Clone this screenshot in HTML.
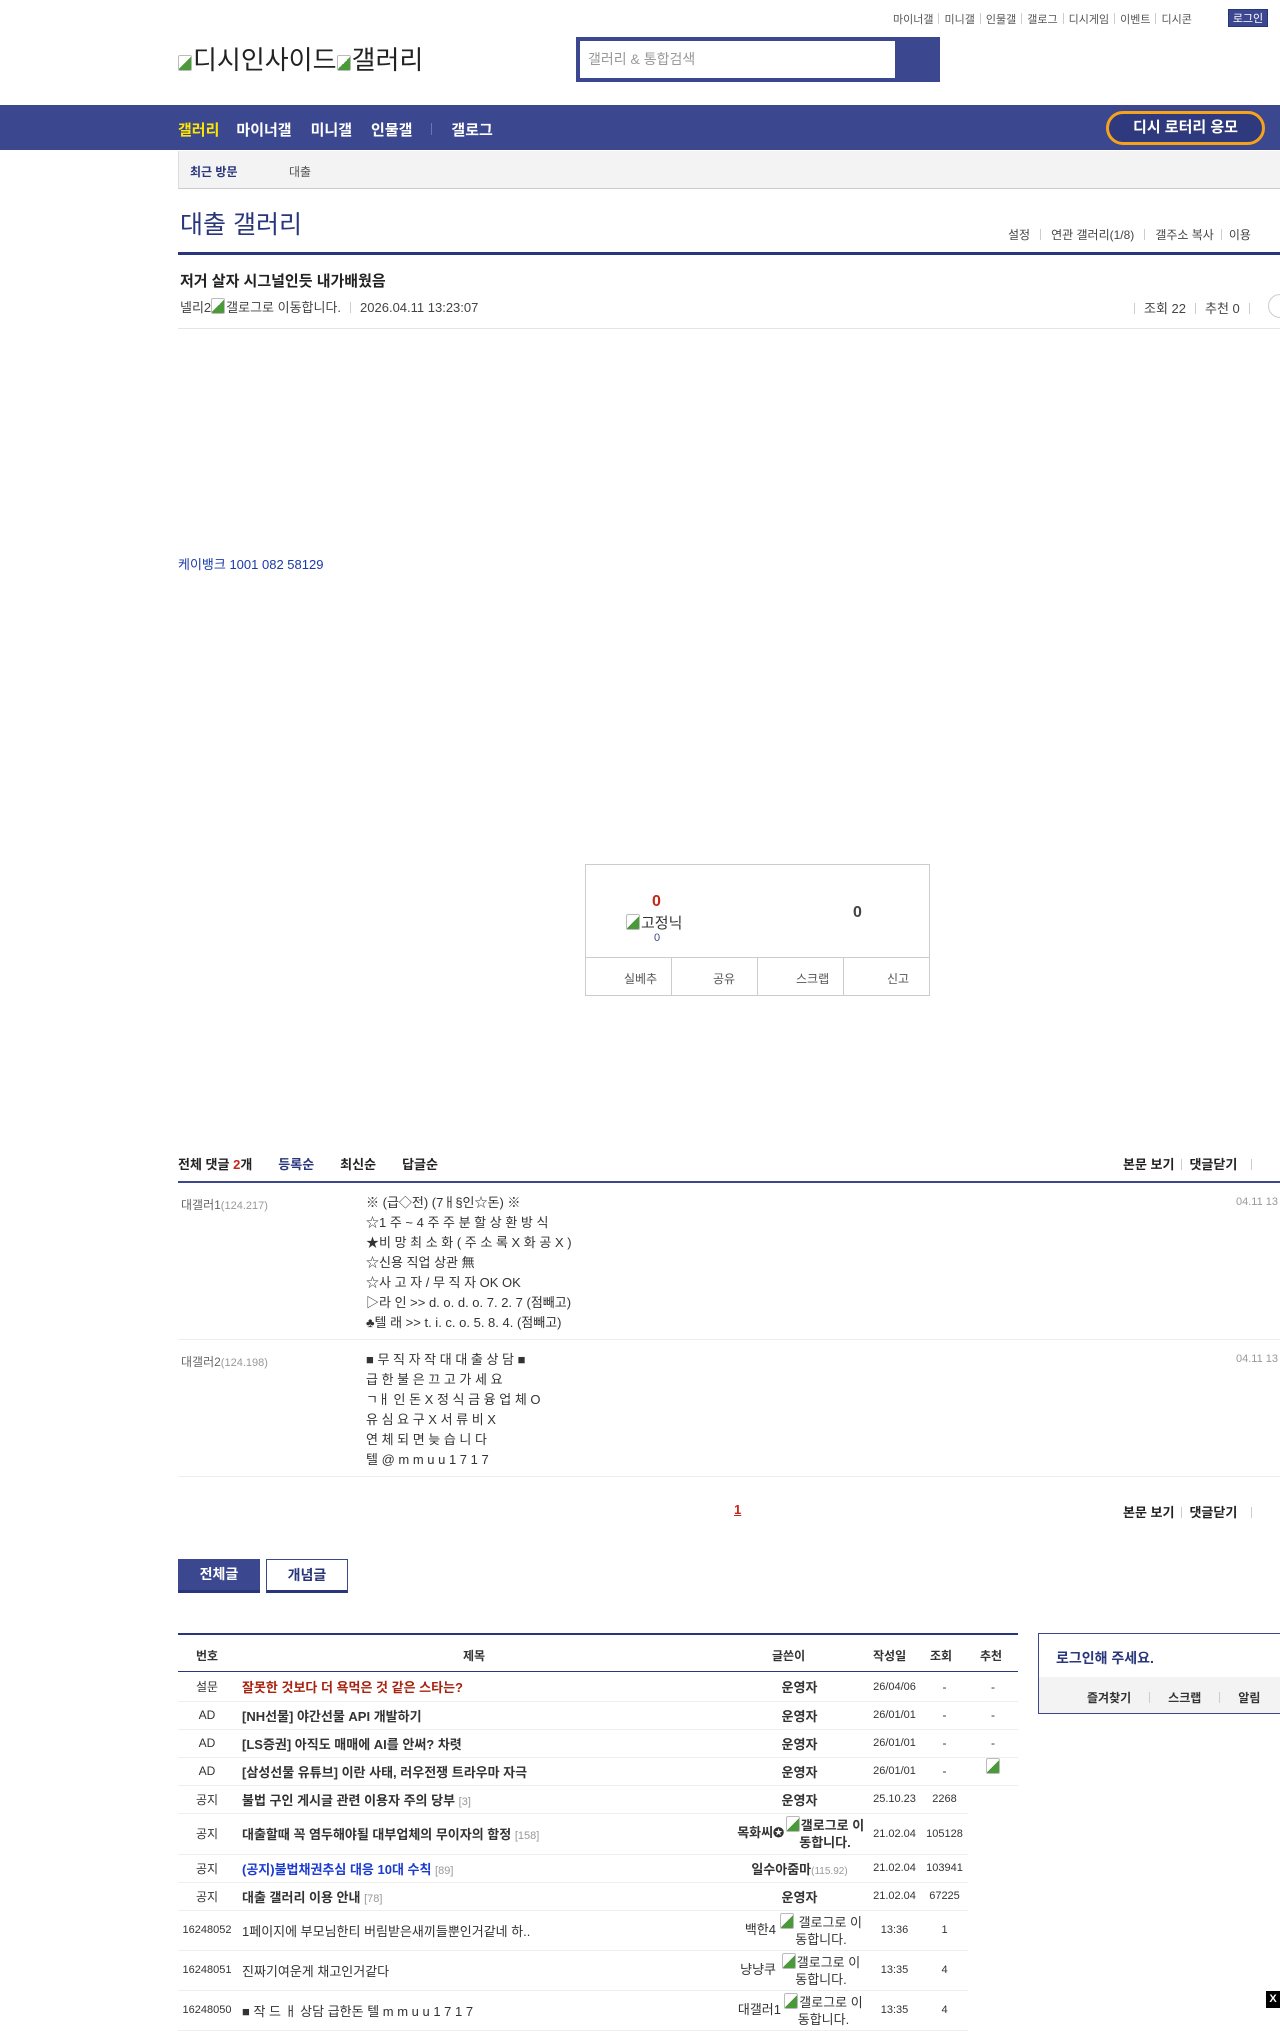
<!DOCTYPE html>
<html><head><meta charset="utf-8">
<style>
*{margin:0;padding:0;box-sizing:border-box}
body{width:1280px;height:2008px;position:relative;overflow:hidden;background:#fff;font-family:"Liberation Sans","Noto Sans CJK KR",sans-serif;color:#333;font-size:13px}
.a{position:absolute;white-space:nowrap}
.navy{color:#29367c}
.sep{display:inline-block;width:1px;height:11px;background:#ccc;margin:0 7px;vertical-align:-1px}
.img{display:inline-block;width:14px;height:16px;border:1px solid #bbb;border-radius:2px;background:linear-gradient(135deg,#fff 50%,#4a9a3a 50%);vertical-align:-2px;margin-right:1px}
table{border-collapse:collapse;white-space:normal !important;table-layout:fixed}
.lt td{height:28px;border-bottom:1px solid #eee;font-size:12px;text-align:center;white-space:nowrap}
.lt td.t{text-align:left;font-size:13px;padding-left:6px}
.lt td.w{font-size:13px;white-space:normal}
.gl{display:inline-block;vertical-align:middle;text-align:center;white-space:normal;font-size:13px}
</style></head><body>
<div class="a" style="top:11px;left:893px;font-size:11px;color:#555">마이너갤<span class="sep" style="margin:0 5px"></span>미니갤<span class="sep" style="margin:0 5px"></span>인물갤<span class="sep" style="margin:0 5px"></span>갤로그<span class="sep" style="margin:0 5px"></span>디시게임<span class="sep" style="margin:0 5px"></span>이벤트<span class="sep" style="margin:0 5px"></span>디시콘</div>
<div class="a" style="top:9px;left:1228px;width:40px;height:18px;background:#3b4890;color:#fff;font-size:11px;text-align:center;line-height:18px;border:1px solid #29367c">로그인</div>
<div class="a" style="top:40px;left:178px;font-size:26px;color:#222"><span class="img"></span>디시인사이드<span class="img"></span>갤러리</div>
<div class="a" style="top:37px;left:576px;width:364px;height:45px;background:#3b4890"></div>
<div class="a" style="top:41px;left:580px;width:315px;height:37px;background:#fff;color:#999;font-size:14px;line-height:37px;padding-left:8px">갤러리 &amp; 통합검색</div>
<div class="a" style="top:105px;left:0;width:1280px;height:45px;background:#3b4890"></div>
<div class="a" style="top:119px;left:178px;font-size:15px;font-weight:bold;color:#fff"><span style="color:#ffe600">갤러리</span><span style="margin-left:17px">마이너갤</span><span style="margin-left:19px">미니갤</span><span style="margin-left:19px">인물갤</span><span style="display:inline-block;width:1px;height:12px;background:#6a76b0;margin:0 19px"></span>갤로그</div>
<div class="a" style="top:111px;left:1106px;width:159px;height:34px;border:3px solid #f7a21b;border-radius:17px;background:#2f3a7e;color:#fff;font-weight:bold;font-size:15px;text-align:center;line-height:28px">디시 로터리 응모</div>
<div class="a" style="top:151px;left:178px;width:1102px;height:38px;background:#f3f3f3;border-left:1px solid #ddd;border-bottom:1px solid #ccc"></div>
<div class="a navy" style="top:163px;left:190px;font-size:12px;font-weight:bold">최근 방문</div>
<div class="a" style="top:163px;left:289px;font-size:12px;color:#555">대출</div>
<div class="a navy" style="top:205px;left:180px;font-size:25px">대출 갤러리</div>
<div class="a" style="top:226px;left:1008px;font-size:12px;color:#444">설정<span class="sep" style="margin:0 10px"></span>연관 갤러리(1/8)<span class="sep" style="margin:0 10px"></span>갤주소 복사<span class="sep" style="margin:0 7px"></span>이용</div>
<div class="a" style="top:252px;left:178px;width:1102px;height:3px;background:#29367c"></div>
<div class="a" style="top:270px;left:180px;font-size:15px;font-weight:bold;color:#222">저거 살자 시그널인듯 내가배웠음</div>
<div class="a" style="top:297px;left:180px;font-size:13px;color:#444">넬리2<span class="img"></span>갤로그로 이동합니다.<span class="sep" style="margin:0 9px"></span>2026.04.11 13:23:07</div>
<div class="a" style="top:298px;left:1134px;font-size:13px;color:#444"><span class="sep" style="margin:0 9px 0 0"></span>조회 22<span class="sep" style="margin:0 9px"></span>추천 0<span class="sep" style="margin:0 9px"></span></div>
<div class="a" style="top:294px;left:1268px;width:30px;height:24px;border:1px solid #ccc;border-radius:12px"></div>
<div class="a" style="top:328px;left:178px;width:1102px;height:1px;background:#e5e5e5"></div>
<div class="a" style="top:554px;left:178px;font-size:13px;color:#1a3aa8">케이뱅크 1001 082 58129</div>
<div class="a" style="top:864px;left:585px;width:345px;height:132px;border:1px solid #ccc"></div>
<div class="a" style="top:893px;left:652px;font-size:16px;font-weight:bold;color:#c4271a">0</div>
<div class="a" style="top:912px;left:626px;font-size:15px;color:#333"><span class="img"></span>고정닉</div>
<div class="a" style="top:932px;left:654px;font-size:11px;color:#3b4890">0</div>
<div class="a" style="top:904px;left:853px;font-size:16px;font-weight:bold;color:#444">0</div>
<div class="a" style="top:957px;left:585px;width:345px;height:1px;background:#ccc"></div>
<div class="a" style="top:957px;left:671px;width:1px;height:39px;background:#ccc"></div>
<div class="a" style="top:957px;left:757px;width:1px;height:39px;background:#ccc"></div>
<div class="a" style="top:957px;left:843px;width:1px;height:39px;background:#ccc"></div>
<div class="a" style="top:970px;left:624px;font-size:12px;color:#555">실베추</div>
<div class="a" style="top:970px;left:713px;font-size:12px;color:#555">공유</div>
<div class="a" style="top:970px;left:796px;font-size:12px;color:#555">스크랩</div>
<div class="a" style="top:970px;left:887px;font-size:12px;color:#555">신고</div>
<div class="a" style="top:1154px;left:178px;font-size:13px;font-weight:bold;color:#222">전체 댓글 <span style="color:#c4271a">2</span>개<span class="navy" style="margin-left:26px">등록순</span><span style="margin-left:26px">최신순</span><span style="margin-left:26px">답글순</span></div>
<div class="a" style="top:1154px;left:1123px;font-size:13px;font-weight:bold;color:#222">본문 보기<span class="sep"></span>댓글닫기<span class="sep" style="margin-left:14px"></span></div>
<div class="a" style="top:1181px;left:178px;width:1102px;height:2px;background:#3b4890"></div>
<div class="a" style="top:1196px;left:181px;font-size:12px;color:#666">대갤러1<span style="font-size:11px;color:#999">(124.217)</span></div>
<div class="a" style="top:1196px;left:1236px;font-size:11px;color:#999">04.11 13</div>
<div class="a" style="top:1193px;left:366px;font-size:13px;color:#333;line-height:20px">※ (급◇전) (7ㅐ§인☆돈) ※<br>☆1 주 ~ 4 주 주 분 할 상 환 방 식<br>★비 망 최 소 화 ( 주 소 록 X 화 공 X )<br>☆신용 직업 상관 無<br>☆사 고 자 / 무 직 자 OK OK<br>▷라 인 &gt;&gt; d. o. d. o. 7. 2. 7 (점빼고)<br>♣텔 래 &gt;&gt; t. i. c. o. 5. 8. 4. (점빼고)</div>
<div class="a" style="top:1339px;left:178px;width:1102px;height:1px;background:#eee"></div>
<div class="a" style="top:1353px;left:181px;font-size:12px;color:#666">대갤러2<span style="font-size:11px;color:#999">(124.198)</span></div>
<div class="a" style="top:1353px;left:1236px;font-size:11px;color:#999">04.11 13</div>
<div class="a" style="top:1350px;left:366px;font-size:13px;color:#333;line-height:20px">■ 무 직 자 작 대 대 출 상 담 ■<br>급 한 불 은 끄 고 가 세 요<br>ㄱㅐ 인 돈 X 정 식 금 융 업 체 O<br>유 심 요 구 X 서 류 비 X<br>연 체 되 면 늦 습 니 다<br>텔 @ m m u u 1 7 1 7</div>
<div class="a" style="top:1476px;left:178px;width:1102px;height:1px;background:#eee"></div>
<div class="a" style="top:1502px;left:734px;font-size:13px;font-weight:bold;color:#c4271a;text-decoration:underline">1</div>
<div class="a" style="top:1502px;left:1123px;font-size:13px;font-weight:bold;color:#222">본문 보기<span class="sep"></span>댓글닫기<span class="sep" style="margin-left:14px"></span></div>
<div class="a" style="top:1559px;left:178px;width:82px;height:34px;background:#3b4890;border-bottom:3px solid #29367c;color:#fff;font-weight:bold;font-size:14px;text-align:center;line-height:31px">전체글</div>
<div class="a" style="top:1559px;left:266px;width:82px;height:34px;background:#fff;border:1px solid #3b4890;border-bottom:3px solid #29367c;color:#29367c;font-weight:bold;font-size:14px;text-align:center;line-height:30px">개념글</div>
<div class="a" style="top:1633px;left:178px;width:840px;height:2px;background:#29367c"></div>
<div class="a" style="top:1671px;left:178px;width:840px;height:1px;background:#29367c"></div>
<div class="a" style="top:1647px;left:196px;font-size:12px;font-weight:bold;color:#333">번호</div>
<div class="a" style="top:1647px;left:463px;font-size:12px;font-weight:bold;color:#333">제목</div>
<div class="a" style="top:1647px;left:772px;font-size:12px;font-weight:bold;color:#333">글쓴이</div>
<div class="a" style="top:1647px;left:873px;font-size:12px;font-weight:bold;color:#333">작성일</div>
<div class="a" style="top:1647px;left:930px;font-size:12px;font-weight:bold;color:#333">조회</div>
<div class="a" style="top:1647px;left:980px;font-size:12px;font-weight:bold;color:#333">추천</div>
<table class="a lt" style="top:1673px;left:178px;width:840px">
<colgroup><col style="width:58px"><col style="width:495px"><col style="width:137px"><col style="width:53px"><col style="width:47px"><col style="width:50px"></colgroup>
<tr><td>설문</td><td class="t" style="color:#a8230f;font-weight:bold">잘못한 것보다 더 욕먹은 것 같은 스타는?</td><td class="w" style="font-weight:bold">운영자</td><td style="font-size:11px">26/04/06</td><td>-</td><td>-</td></tr>
<tr><td>AD</td><td class="t" style="font-weight:bold">[NH선물] 야간선물 API 개발하기</td><td class="w" style="font-weight:bold">운영자</td><td style="font-size:11px">26/01/01</td><td>-</td><td>-</td></tr>
<tr><td>AD</td><td class="t" style="font-weight:bold">[LS증권] 아직도 매매에 AI를 안써? 차렷</td><td class="w" style="font-weight:bold">운영자</td><td style="font-size:11px">26/01/01</td><td>-</td><td>-</td></tr>
<tr><td>AD</td><td class="t" style="font-weight:bold">[삼성선물 유튜브] 이란 사태, 러우전쟁 트라우마 자극</td><td class="w" style="font-weight:bold">운영자</td><td style="font-size:11px">26/01/01</td><td>-</td><td style="vertical-align:top"><span class="img"></span></td></tr>
<tr><td>공지</td><td class="t" style="font-weight:bold">불법 구인 게시글 관련 이용자 주의 당부 <span style="font-weight:normal;color:#999;font-size:11px">[3]</span></td><td class="w" style="font-weight:bold">운영자</td><td style="font-size:11px">25.10.23</td><td style="font-size:11px">2268</td><td style="border:0"></td></tr>
<tr><td style="height:41px">공지</td><td class="t" style="font-weight:bold">대출할때 꼭 염두해야될 대부업체의 무이자의 함정 <span style="font-weight:normal;color:#999;font-size:11px">[158]</span></td><td class="w" style="font-weight:bold;line-height:17px;white-space:nowrap;text-align:right;padding-right:2px">목화씨✪<span class="gl" style="width:82px;font-weight:bold"><span class="img"></span>갤로그로 이동합니다.</span></td><td style="font-size:11px">21.02.04</td><td style="font-size:11px">105128</td><td style="border:0"></td></tr>
<tr><td>공지</td><td class="t" style="font-weight:bold;color:#1a3ad0">(공지)불법채권추심 대응 10대 수칙 <span style="font-weight:normal;color:#999;font-size:11px">[89]</span></td><td class="w" style="font-weight:bold;white-space:nowrap">일수아줌마<span style="font-weight:normal;color:#999;font-size:10px">(115.92)</span></td><td style="font-size:11px">21.02.04</td><td style="font-size:11px">103941</td><td style="border:0"></td></tr>
<tr><td>공지</td><td class="t" style="font-weight:bold">대출 갤러리 이용 안내 <span style="font-weight:normal;color:#999;font-size:11px">[78]</span></td><td class="w" style="font-weight:bold">운영자</td><td style="font-size:11px">21.02.04</td><td style="font-size:11px">67225</td><td style="border:0"></td></tr>
<tr><td style="height:40px;font-size:11px">16248052</td><td class="t">1페이지에 부모님한티 버림받은새끼들뿐인거같네 하..</td><td class="w" style="line-height:17px;white-space:nowrap;text-align:right;padding-right:2px">백한4<span class="gl" style="width:90px"><span class="img"></span> 갤로그로 이동합니다.</span></td><td style="font-size:11px">13:36</td><td style="font-size:11px">1</td><td style="border:0"></td></tr>
<tr><td style="height:40px;font-size:11px">16248051</td><td class="t">진짜기여운게 채고인거같다</td><td class="w" style="line-height:17px;white-space:nowrap;text-align:right;padding-right:2px">냥냥쿠<span class="gl" style="width:90px"><span class="img"></span>갤로그로 이동합니다.</span></td><td style="font-size:11px">13:35</td><td style="font-size:11px">4</td><td style="border:0"></td></tr>
<tr><td style="height:40px;font-size:11px">16248050</td><td class="t">■ 작 드 ㅐ 상담 급한돈 텔 m m u u 1 7 1 7</td><td class="w" style="line-height:17px;white-space:nowrap;text-align:right;padding-right:2px">대갤러1<span class="gl" style="width:85px"><span class="img"></span>갤로그로 이동합니다.</span></td><td style="font-size:11px">13:35</td><td style="font-size:11px">4</td><td style="border:0"></td></tr>
</table>
<div class="a" style="top:1633px;left:1038px;width:260px;height:81px;border:1px solid #3b4890"></div>
<div class="a navy" style="top:1648px;left:1056px;font-size:14px;font-weight:bold">로그인해 주세요.</div>
<div class="a" style="top:1677px;left:1039px;width:241px;height:36px;background:#f3f3f3"></div>
<div class="a" style="top:1689px;left:1087px;font-size:12px;font-weight:bold;color:#333">즐겨찾기<span class="sep" style="margin:0 18px"></span>스크랩<span class="sep" style="margin:0 18px"></span>알림</div>
<div class="a" style="top:1991px;left:1266px;width:14px;height:17px;background:#000;color:#fff;font-size:11px;font-weight:bold;text-align:center;line-height:17px">X</div>
</body></html>
